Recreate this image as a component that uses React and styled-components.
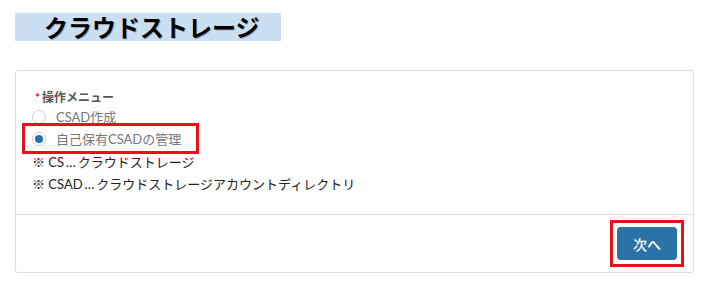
import React, {useState} from "react";
import styled, {createGlobalStyle} from "styled-components";

const GlobalStyle = createGlobalStyle`
  body {
    margin: 0;
    background: #fff;
    font-family: Lato, "Noto Sans CJK JP", sans-serif;
  }
`;

const Page = styled.div`
  padding: 13px 0 0 15px;
  width: 679px;
`;

const Banner = styled.h1`
  margin: 0;
  width: 237px;
  height: 28px;
  padding-left: 29px;
  background: #cbdff3;
  font-family: "Noto Sans CJK JP", sans-serif;
  font-size: 24px;
  font-weight: 700;
  line-height: 28px;
  color: #000;
  text-shadow: 1px 1px 0 rgba(0, 0, 0, 0.25);
`;

const Card = styled.section`
  margin-top: 29px;
  border: 1px solid #dcdcdc;
  border-radius: 3px;
`;

const CardBody = styled.div`
  height: 125px;
  padding: 18px 0 0 19px;
  border-bottom: 1px solid #dcdcdc;
`;

const FieldLabel = styled.div`
  font-size: 12px;
  font-weight: 700;
  line-height: 18px;
  color: #555;

  span {
    color: #e4002b;
    margin-right: 2px;
  }
`;

const Option = styled.label`
  display: flex;
  align-items: center;
  gap: 10px;
  width: fit-content;
  height: ${({highlighted}) => (highlighted ? "25px" : "19px")};
  margin-left: ${({highlighted}) => (highlighted ? "-10px" : "-3px")};
  padding: 0 15px 0 ${({highlighted}) => (highlighted ? "7px" : "0")};
  outline: ${({highlighted}) => (highlighted ? "3px solid #e8111b" : "none")};
  font-size: 13px;
  color: #777;
  cursor: pointer;
`;

const Radio = styled.span`
  box-sizing: border-box;
  width: 14px;
  height: 14px;
  border: 1px solid #cfcfcf;
  border-radius: 50%;
  background: #fff;
  display: flex;
  align-items: center;
  justify-content: center;

  &::after {
    content: "";
    width: 8px;
    height: 8px;
    border-radius: 50%;
    background: ${({checked}) => (checked ? "#2a6fa8" : "transparent")};
  }
`;

const Note = styled.div`
  margin-left: -3px;
  font-size: 13px;
  line-height: 22px;
  color: #222;

  b {
    font-weight: 400;
    letter-spacing: -1px;
    margin: 0 3px 0 2px;
  }
`;

const CardFooter = styled.div`
  height: 57px;
  display: flex;
  align-items: center;
  justify-content: flex-end;
  padding-right: 9px;
`;

const Highlight = styled.div`
  border: 3px solid #e8111b;
  padding: 4px;
  display: flex;
`;

const NextButton = styled.button`
  width: 60px;
  height: 33px;
  border: none;
  border-radius: 4px;
  background: #2a72a8;
  color: #fff;
  font-family: "Noto Sans CJK JP", sans-serif;
  font-size: 14px;
  font-weight: 500;
  cursor: pointer;
`;

const options = [
  {id: "create", label: "CSAD作成"},
  {id: "manage", label: "自己保有CSADの管理"},
];

const App = () => {
  const [selected, setSelected] = useState("manage");

  return (
    <Page>
      <GlobalStyle/>
      <Banner>クラウドストレージ</Banner>

      <Card>
        <CardBody>
          <FieldLabel><span>*</span>操作メニュー</FieldLabel>
          {options.map(option => (
            <Option
              key={option.id}
              highlighted={option.id === "manage"}
              onClick={() => setSelected(option.id)}
            >
              <Radio checked={selected === option.id}/>
              {option.label}
            </Option>
          ))}
          <Note>※ CS<b>…</b>クラウドストレージ</Note>
          <Note>※ CSAD<b>…</b>クラウドストレージアカウントディレクトリ</Note>
        </CardBody>

        <CardFooter>
          <Highlight>
            <NextButton>次へ</NextButton>
          </Highlight>
        </CardFooter>
      </Card>
    </Page>
  );
};

export default App;
